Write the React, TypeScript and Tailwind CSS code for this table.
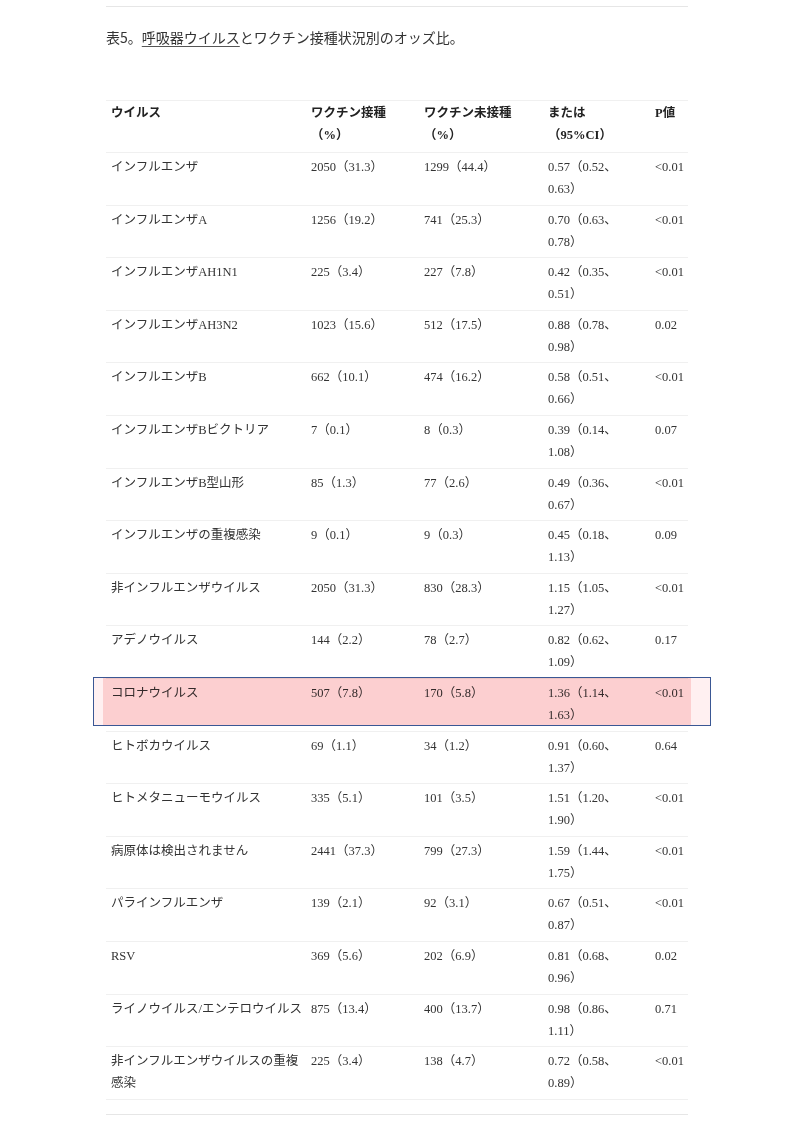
import React from "react";

const rows: [string, string, string, string, string, string][] = [
  ["インフルエンザ", "2050（31.3）", "1299（44.4）", "0.57（0.52、", "0.63）", "<0.01"],
  ["インフルエンザA", "1256（19.2）", "741（25.3）", "0.70（0.63、", "0.78）", "<0.01"],
  ["インフルエンザAH1N1", "225（3.4）", "227（7.8）", "0.42（0.35、", "0.51）", "<0.01"],
  ["インフルエンザAH3N2", "1023（15.6）", "512（17.5）", "0.88（0.78、", "0.98）", "0.02"],
  ["インフルエンザB", "662（10.1）", "474（16.2）", "0.58（0.51、", "0.66）", "<0.01"],
  ["インフルエンザBビクトリア", "7（0.1）", "8（0.3）", "0.39（0.14、", "1.08）", "0.07"],
  ["インフルエンザB型山形", "85（1.3）", "77（2.6）", "0.49（0.36、", "0.67）", "<0.01"],
  ["インフルエンザの重複感染", "9（0.1）", "9（0.3）", "0.45（0.18、", "1.13）", "0.09"],
  ["非インフルエンザウイルス", "2050（31.3）", "830（28.3）", "1.15（1.05、", "1.27）", "<0.01"],
  ["アデノウイルス", "144（2.2）", "78（2.7）", "0.82（0.62、", "1.09）", "0.17"],
  ["コロナウイルス", "507（7.8）", "170（5.8）", "1.36（1.14、", "1.63）", "<0.01"],
  ["ヒトボカウイルス", "69（1.1）", "34（1.2）", "0.91（0.60、", "1.37）", "0.64"],
  ["ヒトメタニューモウイルス", "335（5.1）", "101（3.5）", "1.51（1.20、", "1.90）", "<0.01"],
  ["病原体は検出されません", "2441（37.3）", "799（27.3）", "1.59（1.44、", "1.75）", "<0.01"],
  ["パラインフルエンザ", "139（2.1）", "92（3.1）", "0.67（0.51、", "0.87）", "<0.01"],
  ["RSV", "369（5.6）", "202（6.9）", "0.81（0.68、", "0.96）", "0.02"],
  ["ライノウイルス/エンテロウイルス", "875（13.4）", "400（13.7）", "0.98（0.86、", "1.11）", "0.71"],
  ["非インフルエンザウイルスの重複\n感染", "225（3.4）", "138（4.7）", "0.72（0.58、", "0.89）", "<0.01"],
];

export default function App() {
  return (
    <div className="min-h-[1123px] bg-white text-[#333] font-['Liberation_Serif','Noto_Sans_CJK_JP',serif]">
      <div className="mx-auto w-[582px] pt-[6px]">
        {/* top rule */}
        <div className="border-t border-[#e6e6e6]" />

        {/* caption */}
        <p className="mt-[19px] text-[14px] leading-[22px] font-['Noto_Sans_CJK_JP',sans-serif] text-[#333]">
          表5。<span className="underline underline-offset-[3px] decoration-[#555]">呼吸器ウイルス</span>とワクチン接種状況別のオッズ比。
        </p>

        {/* table */}
        <table className="mt-[52px] w-full table-fixed border-collapse text-[12.5px] leading-[22px]">
          <colgroup>
            <col className="w-[200px]" />
            <col className="w-[113px]" />
            <col className="w-[124px]" />
            <col className="w-[107px]" />
            <col className="w-[38px]" />
          </colgroup>
          <thead>
            <tr className="border-t border-b border-[#f0f0f0] align-top font-bold text-[#222]">
              <th className="pl-[5px] pt-[1px] pb-[6px] text-left font-bold">ウイルス</th>
              <th className="pl-[5px] pt-[1px] pb-[6px] text-left font-bold">
                ワクチン接種
                <br />
                （%）
              </th>
              <th className="pl-[5px] pt-[1px] pb-[6px] text-left font-bold">
                ワクチン未接種
                <br />
                （%）
              </th>
              <th className="pl-[5px] pt-[1px] pb-[6px] text-left font-bold">
                または
                <br />
                （95%CI）
              </th>
              <th className="pl-[5px] pt-[1px] pb-[6px] text-left font-bold">P値</th>
            </tr>
          </thead>
          <tbody>
            {rows.map((r, i) => {
              const hl = i === 10;
              const [n1, n2] = r[0].split("\n");
              return (
                <tr key={i} className="border-b border-[#f0f0f0] align-top">
                  <td className={"pl-[5px] pt-[3px] pb-[4.6px] whitespace-nowrap" + (hl ? " relative" : "")}>
                    {/* selection highlight over the coronavirus row */}
                    {hl && (
                      <div className="pointer-events-none absolute left-[-13px] top-[-2px] flex h-[49px] w-[618px] border-[1.5px] border-[#3a5794] mix-blend-multiply">
                        <div className="w-[9px] bg-[#fff0f1]" />
                        <div className="flex-1 bg-[#fccfd0]" />
                        <div className="w-[19px] bg-[#fff0f1]" />
                      </div>
                    )}
                    {n1}
                    {n2 && (
                      <>
                        <br />
                        {n2}
                      </>
                    )}
                  </td>
                  <td className="pl-[5px] pt-[3px] pb-[4.6px] whitespace-nowrap">{r[1]}</td>
                  <td className="pl-[5px] pt-[3px] pb-[4.6px] whitespace-nowrap">{r[2]}</td>
                  <td className="pl-[5px] pt-[3px] pb-[4.6px] whitespace-nowrap">
                    {r[3]}
                    <br />
                    {r[4]}
                  </td>
                  <td className="pl-[5px] pt-[3px] pb-[4.6px] whitespace-nowrap">{r[5]}</td>
                </tr>
              );
            })}
          </tbody>
        </table>

        {/* bottom rule */}
        <div className="mt-[14px] border-t border-[#e6e6e6]" />
      </div>
    </div>
  );
}
